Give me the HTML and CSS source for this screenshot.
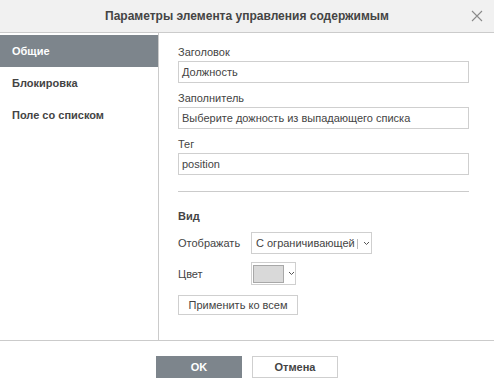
FILE: index.html
```html
<!DOCTYPE html>
<html lang="ru">
<head>
    <meta charset="UTF-8">
    <meta name="viewport" content="width=device-width, initial-scale=1.0">
    <title>Параметры элемента управления содержимым</title>
    <link rel="stylesheet" href="styles.css">
</head>
<body>
    <div class="dialog">
        <div class="dialog-header">
            <span class="dialog-title">Параметры элемента управления содержимым</span>
            <svg class="close" width="12" height="12" viewBox="0 0 12 12">
                <path d="M1 1 L11 11 M11 1 L1 11" stroke="#8a8a8a" stroke-width="1.1" fill="none"/>
            </svg>
        </div>

        <div class="dialog-body">
            <ul class="side-menu">
                <li class="active">Общие</li>
                <li>Блокировка</li>
                <li>Поле со списком</li>
            </ul>

            <div class="content">
                <label class="field-label">Заголовок</label>
                <div class="text-input">Должность</div>

                <label class="field-label">Заполнитель</label>
                <div class="text-input">Выберите дожность из выпадающего списка</div>

                <label class="field-label">Тег</label>
                <div class="text-input">position</div>

                <hr class="separator">

                <div class="section-title">Вид</div>

                <div class="row">
                    <span class="row-label">Отображать</span>
                    <div class="combo">
                        <span class="combo-text">С ограничивающей</span>
                        <svg class="caret" width="7" height="5" viewBox="0 0 7 5">
                            <path d="M1 1 L3.5 3.5 L6 1" stroke="#555" stroke-width="1" fill="none"/>
                        </svg>
                    </div>
                </div>

                <div class="row">
                    <span class="row-label">Цвет</span>
                    <div class="color-picker">
                        <span class="swatch"></span>
                        <svg class="caret" width="7" height="5" viewBox="0 0 7 5">
                            <path d="M1 1 L3.5 3.5 L6 1" stroke="#555" stroke-width="1" fill="none"/>
                        </svg>
                    </div>
                </div>

                <button class="btn-plain">Применить ко всем</button>
            </div>
        </div>

        <div class="dialog-footer">
            <button class="btn btn-primary">OK</button>
            <button class="btn">Отмена</button>
        </div>
    </div>
</body>
</html>
```

FILE: styles.css
```css
body {
    margin: 0;
    padding: 0;
    font-family: Arial, "Liberation Sans", sans-serif;
    font-size: 11px;
    color: #444;
    background: #fff;
}

.dialog {
    width: 494px;
    height: 388px;
    display: flex;
    flex-direction: column;
    overflow: hidden;
}

.dialog-header {
    height: 32px;
    flex: none;
    background-color: #f1f1f1;
    border-bottom: 1px solid #cbcbcb;
    display: flex;
    align-items: center;
    justify-content: center;
    position: relative;
}

.dialog-title {
    font-size: 12px;
    font-weight: bold;
    color: #444;
}

.close {
    position: absolute;
    right: 11px;
    top: 10px;
}

.dialog-body {
    height: 307px;
    flex: none;
    display: flex;
    border-bottom: 1px solid #cbcbcb;
}

.side-menu {
    list-style-type: none;
    margin: 0;
    padding: 2px 0 0;
    width: 158px;
    border-right: 1px solid #cbcbcb;
}

.side-menu li {
    height: 32px;
    line-height: 32px;
    padding-left: 12px;
    font-weight: bold;
    color: #444;
}

.side-menu li.active {
    background-color: #7d858c;
    color: #fff;
}

.content {
    flex: 1;
    padding: 12px 25px 0 19px;
    display: flex;
    flex-direction: column;
    align-items: flex-start;
}

.field-label {
    display: block;
    line-height: 14px;
    margin-bottom: 2px;
}

.text-input {
    box-sizing: border-box;
    width: 100%;
    height: 22px;
    line-height: 20px;
    border: 1px solid #cfcfcf;
    padding: 0 3px;
    margin-bottom: 8px;
    white-space: nowrap;
    overflow: hidden;
}

.separator {
    width: 100%;
    border: none;
    border-top: 1px solid #cbcbcb;
    margin: 8px 0 17px;
}

.section-title {
    font-weight: bold;
    line-height: 14px;
    margin-bottom: 9px;
}

.row {
    display: flex;
    align-items: center;
    margin-bottom: 8px;
}

.row-label {
    width: 73px;
}

.combo {
    box-sizing: border-box;
    width: 121px;
    height: 22px;
    border: 1px solid #cfcfcf;
    display: flex;
    align-items: center;
    padding-left: 4px;
}

.combo-text {
    width: 102px;
    white-space: nowrap;
    position: relative;
}

.combo-text::after {
    content: "";
    position: absolute;
    right: 0;
    top: 2px;
    width: 1px;
    height: 10px;
    background-color: #bbb;
}

.caret {
    margin-left: 5px;
}

.color-picker {
    box-sizing: border-box;
    width: 45px;
    height: 23px;
    border: 1px solid #cfcfcf;
    display: flex;
    align-items: center;
    padding-left: 1px;
}

.swatch {
    box-sizing: border-box;
    width: 31px;
    height: 18px;
    background-color: #d9d9d9;
    border: 1px solid #a8a8a8;
}

.color-picker .caret {
    margin-left: 4px;
}

.btn-plain {
    box-sizing: border-box;
    width: 120px;
    height: 20px;
    margin-top: 2px;
    background: #fff;
    border: 1px solid #cfcfcf;
    font-family: inherit;
    font-size: 11px;
    color: #444;
    padding: 0;
}

.dialog-footer {
    flex: 1;
    display: flex;
    justify-content: center;
    align-items: flex-start;
    padding-top: 15px;
    gap: 10px;
}

.btn {
    box-sizing: border-box;
    width: 86px;
    height: 22px;
    background: #fff;
    border: 1px solid #cfcfcf;
    font-family: inherit;
    font-size: 11px;
    font-weight: bold;
    color: #444;
    padding: 0;
}

.btn-primary {
    background-color: #7d858c;
    border-color: #7d858c;
    color: #fff;
}
```
